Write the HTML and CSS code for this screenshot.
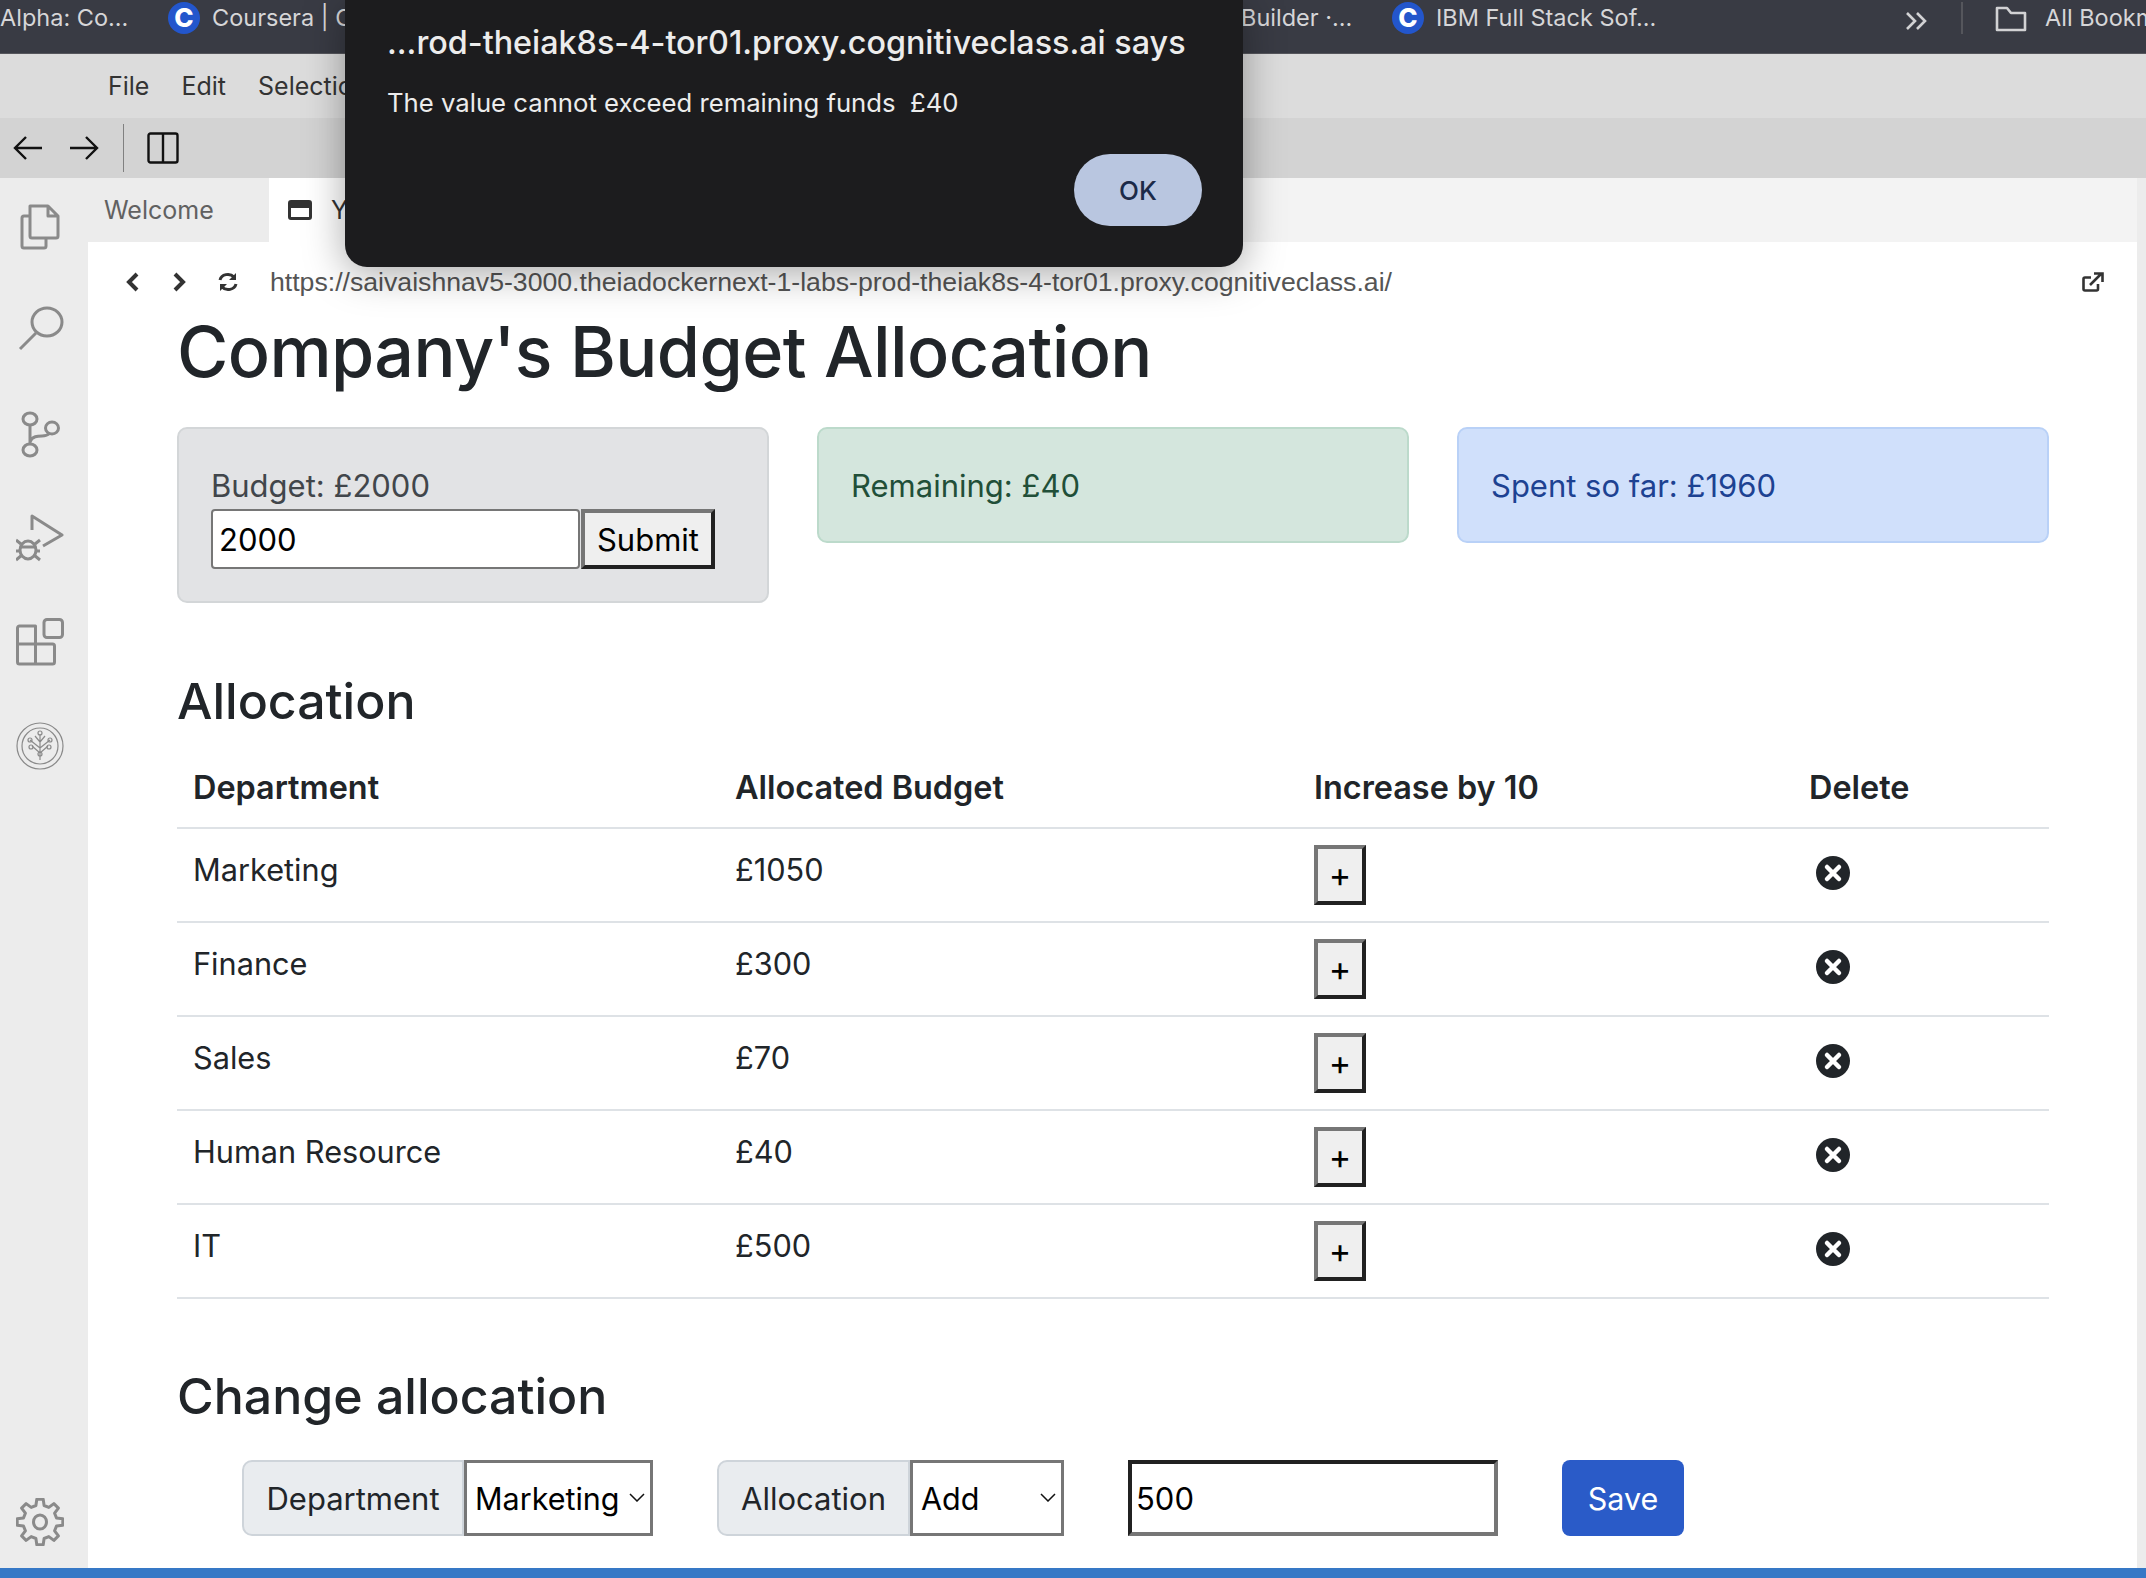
FILE: index.html
```html
<!DOCTYPE html>
<html>
    <head>
        <title>Company's Budget Allocation</title>
        <link rel="stylesheet" href="styles.css">
    </head>
    <body>
        <div class="bookmarks">
            <span class="mark first">Alpha: Co...</span>
            <span class="chip">C</span>
            <span class="mark coursera">Coursera | Coursera</span>
            <span class="mark builder">Builder ·...</span>
            <span class="chip">C</span>
            <span class="mark ibm">IBM Full Stack Sof...</span>
            <span class="more">
                <svg width="22" height="20" viewBox="0 0 22 20"><path d="M2 2l8 8-8 8M12 2l8 8-8 8" fill="none" stroke="#d2d2d4" stroke-width="2.6"/></svg>
            </span>
            <span class="sep"></span>
            <svg class="folder" width="32" height="26" viewBox="0 0 32 26"><path d="M2 24V2h10l4 5h14v17z" fill="none" stroke="#d2d2d4" stroke-width="2.6" stroke-linejoin="round"/></svg>
            <span class="mark all">All Bookmarks</span>
        </div>

        <div class="menubar">
            <span>File</span>
            <span>Edit</span>
            <span>Selection</span>
        </div>

        <div class="toolbar">
            <svg width="30" height="26" viewBox="0 0 30 26"><path d="M29 13H2M13 2L2 13l11 11" fill="none" stroke="#111" stroke-width="2.4"/></svg>
            <svg class="fwd" width="30" height="26" viewBox="0 0 30 26"><path d="M1 13h27M17 2l11 11-11 11" fill="none" stroke="#111" stroke-width="2.4"/></svg>
            <span class="toolsep"></span>
            <svg width="32" height="32" viewBox="0 0 32 32"><rect x="1.5" y="1.5" width="29" height="29" rx="2" fill="none" stroke="#111" stroke-width="2.4"/><path d="M16 2v28" stroke="#111" stroke-width="2.4"/></svg>
        </div>

        <div class="workbench">
            <div class="rail">
                <svg class="railicon" viewBox="0 0 48 48"><path d="M14 4h18l10 10v20a2 2 0 0 1-2 2H16a2 2 0 0 1-2-2zM32 4v10h10M14 14H8a2 2 0 0 0-2 2v28a2 2 0 0 0 2 2h20a2 2 0 0 0 2-2v-8"/></svg>
                <svg class="railicon" viewBox="0 0 48 48"><ellipse cx="31" cy="16" rx="15" ry="14"/><path d="M20 27L4 43"/></svg>
                <svg class="railicon" viewBox="0 0 48 48"><ellipse cx="14" cy="9" rx="7" ry="6"/><ellipse cx="14" cy="40" rx="7" ry="6"/><ellipse cx="36" cy="18" rx="6.5" ry="6"/><path d="M14 15v19M14 32c2-6 8-6 12-6 4 0 6-1 8-3"/></svg>
                <svg class="railicon" viewBox="0 0 48 48"><path d="M16 16V2l30 19-19 11"/><ellipse cx="12" cy="36" rx="8" ry="9"/><path d="M4 33h16M0 26l5 4M24 26l-5 4M0 37h4M20 37h4M0 46l6-5M24 46l-6-5"/></svg>
                <svg class="railicon" viewBox="0 0 48 48"><path d="M1.500 10a2 2 0 0 1 2-2h16v38h-16a2 2 0 0 1-2-2zM19.500 46V26h17a2 2 0 0 1 2 2v16a2 2 0 0 1-2 2zM1.500 26h18"/><rect x="28" y="1.500" width="18.500" height="18" rx="3"/></svg>
                <svg class="railicon thin" viewBox="0 0 48 48"><ellipse cx="24" cy="24" rx="23" ry="23"/><ellipse cx="24" cy="24" rx="18" ry="18"/><path d="M24 38V12M16 24l8 7 8-7M14 18l10 8 10-8M19 14l5 6 5-6"/><circle cx="24" cy="11" r="2"/><circle cx="14" cy="18" r="2"/><circle cx="34" cy="18" r="2"/><circle cx="15" cy="25" r="2"/><circle cx="33" cy="25" r="2"/><circle cx="24" cy="32" r="2"/></svg>
                <svg class="railicon gear" viewBox="0 0 48 48"><polygon transform="translate(24 24)" points="16.5,-4.1 22.8,-3.2 22.8,3.2 16.5,4.1 14.6,8.8 18.4,13.9 13.9,18.4 8.8,14.6 4.1,16.5 3.2,22.8 -3.2,22.8 -4.1,16.5 -8.8,14.6 -13.9,18.4 -18.4,13.9 -14.6,8.8 -16.5,4.1 -22.8,3.2 -22.8,-3.2 -16.5,-4.1 -14.6,-8.8 -18.4,-13.9 -13.9,-18.4 -8.8,-14.6 -4.1,-16.5 -3.2,-22.8 3.2,-22.8 4.1,-16.5 8.8,-14.6 13.9,-18.4 18.4,-13.9 14.6,-8.8"/><ellipse cx="24" cy="24" rx="6.500" ry="7"/></svg>
            </div>

            <div class="main">
                <div class="tabs">
                    <span class="tab">Welcome</span>
                    <span class="tab active">
                        <svg width="24" height="20" viewBox="0 0 24 20"><rect x="1.5" y="1.5" width="21" height="17" rx="1.5" fill="none" stroke="#333" stroke-width="3"/><path d="M2 5h20" stroke="#333" stroke-width="6"/></svg>
                        You
                    </span>
                </div>

                <div class="urlbar">
                    <svg class="navicon" width="14" height="20" viewBox="0 0 14 20"><path d="M11 2L3 10l8 8" fill="none" stroke="#333" stroke-width="4"/></svg>
                    <svg class="navicon" width="14" height="20" viewBox="0 0 14 20"><path d="M3 2l8 8-8 8" fill="none" stroke="#333" stroke-width="4"/></svg>
                    <svg class="navicon" width="20" height="20" viewBox="0 0 20 20"><path d="M2 8a8 7 0 0 1 14-3M18 12a8 7 0 0 1-14 3" fill="none" stroke="#333" stroke-width="3"/><path d="M18 1v7h-7zM2 19v-7h7z" fill="#333"/></svg>
                    <span class="url">https://saivaishnav5-3000.theiadockernext-1-labs-prod-theiak8s-4-tor01.proxy.cognitiveclass.ai/</span>
                    <svg class="popout" width="22" height="20" viewBox="0 0 22 20"><path d="M16 12v5a1.500 1.500 0 0 1-1.500 1.500H3A1.500 1.500 0 0 1 1.500 17V7A1.500 1.500 0 0 1 3 5.500h6" fill="none" stroke="#333" stroke-width="2.600"/><path d="M8 13L19 2M12 1.500h8.500V10" fill="none" stroke="#333" stroke-width="2.600"/></svg>
                </div>

                <div class="page">
                    <h1>Company's Budget Allocation</h1>

                    <div class="cards">
                        <div class="card grey">
                            <div>Budget: £2000</div>
                            <div class="budgetform">
                                <input class="budgetinput" type="text" value="2000">
                                <button class="bevel submit">Submit</button>
                            </div>
                        </div>
                        <div class="card green">Remaining: £40</div>
                        <div class="card blue">Spent so far: £1960</div>
                    </div>

                    <h3 class="alloc">Allocation</h3>

                    <table>
                        <thead>
                            <tr>
                                <th class="col1">Department</th>
                                <th class="col2">Allocated Budget</th>
                                <th class="col3">Increase by 10</th>
                                <th class="col4">Delete</th>
                            </tr>
                        </thead>
                        <tbody>
                            <tr>
                                <td>Marketing</td>
                                <td>£1050</td>
                                <td><button class="bevel plus">+</button></td>
                                <td><svg class="del" viewBox="0 0 34 34"><circle cx="17" cy="17" r="17" fill="#212529"/><path d="M11 11l12 12M23 11L11 23" stroke="#fff" stroke-width="4.500" stroke-linecap="round"/></svg></td>
                            </tr>
                            <tr>
                                <td>Finance</td>
                                <td>£300</td>
                                <td><button class="bevel plus">+</button></td>
                                <td><svg class="del" viewBox="0 0 34 34"><circle cx="17" cy="17" r="17" fill="#212529"/><path d="M11 11l12 12M23 11L11 23" stroke="#fff" stroke-width="4.500" stroke-linecap="round"/></svg></td>
                            </tr>
                            <tr>
                                <td>Sales</td>
                                <td>£70</td>
                                <td><button class="bevel plus">+</button></td>
                                <td><svg class="del" viewBox="0 0 34 34"><circle cx="17" cy="17" r="17" fill="#212529"/><path d="M11 11l12 12M23 11L11 23" stroke="#fff" stroke-width="4.500" stroke-linecap="round"/></svg></td>
                            </tr>
                            <tr>
                                <td>Human Resource</td>
                                <td>£40</td>
                                <td><button class="bevel plus">+</button></td>
                                <td><svg class="del" viewBox="0 0 34 34"><circle cx="17" cy="17" r="17" fill="#212529"/><path d="M11 11l12 12M23 11L11 23" stroke="#fff" stroke-width="4.500" stroke-linecap="round"/></svg></td>
                            </tr>
                            <tr>
                                <td>IT</td>
                                <td>£500</td>
                                <td><button class="bevel plus">+</button></td>
                                <td><svg class="del" viewBox="0 0 34 34"><circle cx="17" cy="17" r="17" fill="#212529"/><path d="M11 11l12 12M23 11L11 23" stroke="#fff" stroke-width="4.500" stroke-linecap="round"/></svg></td>
                            </tr>
                        </tbody>
                    </table>

                    <h3 class="change">Change allocation</h3>

                    <div class="changeform">
                        <label class="addon dept">Department</label>
                        <span class="pickwrap">
                            <select class="pick deptpick"><option>Marketing</option></select>
                            <svg class="caret" width="16" height="9" viewBox="0 0 16 9"><path d="M1 1l7 7 7-7" fill="none" stroke="#111" stroke-width="1.500"/></svg>
                        </span>
                        <label class="addon allocation">Allocation</label>
                        <span class="pickwrap">
                            <select class="pick addpick"><option>Add</option></select>
                            <svg class="caret" width="16" height="9" viewBox="0 0 16 9"><path d="M1 1l7 7 7-7" fill="none" stroke="#111" stroke-width="1.500"/></svg>
                        </span>
                        <input class="amount" type="text" value="500">
                        <button class="save">Save</button>
                    </div>
                </div>
            </div>

            <div class="strip"></div>
        </div>

        <div class="statusbar"></div>

        <div class="dialog">
            <div class="dialogtitle">...rod-theiak8s-4-tor01.proxy.cognitiveclass.ai says</div>
            <div class="dialogmsg">The value cannot exceed remaining funds&nbsp; £40</div>
            <button class="ok">OK</button>
        </div>
    </body>
</html>
```

FILE: styles.css
```css
html, body {
    margin: 0;
    height: 1578px;
    overflow: hidden;
}

body {
    display: flex;
    flex-direction: column;
    font-family: Inter, "Liberation Sans", sans-serif;
    color: #212529;
    background: white;
}

/* browser bookmarks */
.bookmarks {
    height: 54px;
    flex: none;
    display: flex;
    align-items: flex-start;
    background: #393b44;
    border-bottom: 1px solid #55565c;
    box-sizing: border-box;
    overflow: hidden;
    color: #d6d6d8;
    font-size: 23.5px;
    line-height: 36px;
    white-space: nowrap;
}

.mark {
    flex: none;
}

.mark.first {
    width: 168px;
}

.chip {
    width: 32px;
    height: 32px;
    margin-top: 2px;
    border-radius: 50%;
    background: #2356cc;
    color: white;
    font-weight: 800;
    font-size: 26px;
    line-height: 32px;
    text-align: center;
    flex: none;
}

.mark.coursera {
    margin-left: 12px;
    width: 1029px;
}

.mark.builder {
    width: 151px;
}

.mark.ibm {
    margin-left: 12px;
    width: 469px;
}

.more {
    margin-top: 5px;
    width: 56px;
    flex: none;
}

.sep {
    width: 2px;
    height: 32px;
    margin-top: 2px;
    background: #55565c;
    flex: none;
}

.folder {
    margin: 6px 0 0 32px;
    flex: none;
}

.mark.all {
    margin-left: 18px;
}

/* theia menus */
.menubar {
    height: 64px;
    flex: none;
    box-sizing: border-box;
    display: flex;
    gap: 32px;
    padding-left: 108px;
    background: #dcdcdc;
    font-size: 25px;
    line-height: 64px;
    color: #333;
}

.toolbar {
    height: 60px;
    flex: none;
    display: flex;
    align-items: center;
    padding-left: 13px;
    background: #d3d3d3;
}

.fwd {
    margin-left: 26px;
}

.toolsep {
    width: 1px;
    height: 48px;
    margin: 0 23px 0 24px;
    background: #808080;
}

.workbench {
    flex: 1;
    display: flex;
    min-height: 0;
}

.rail {
    width: 88px;
    flex: none;
    display: flex;
    flex-direction: column;
    align-items: flex-start;
    gap: 56px;
    padding: 24px 0 0 16px;
    box-sizing: border-box;
    background: #ececec;
}

.railicon {
    width: 48px;
    height: 48px;
    fill: none;
    stroke: #8a8a8a;
    stroke-width: 3;
    stroke-linejoin: round;
}

.railicon.thin {
    stroke-width: 1.2;
}

.railicon.gear {
    margin-top: auto;
    margin-bottom: 22px;
}

.main {
    flex: 1;
    min-width: 0;
}

.strip {
    width: 9px;
    flex: none;
    background: #ececec;
}

.tabs {
    height: 64px;
    display: flex;
    background: #f3f3f3;
    font-size: 25px;
    line-height: 64px;
    color: #616161;
}

.tab {
    box-sizing: border-box;
    width: 181px;
    padding-left: 16px;
    background: #ececec;
}

.tab.active {
    display: flex;
    align-items: center;
    gap: 19px;
    width: 500px;
    padding-left: 19px;
    background: white;
    color: #333;
}

.urlbar {
    height: 64px;
    display: flex;
    align-items: center;
    padding: 8px 0 0 38px;
    font-family: "Liberation Sans", sans-serif;
    font-size: 26.65px;
    color: #555;
}

.navicon {
    margin-right: 32px;
}

.navicon:nth-child(3) {
    margin-right: 32px;
}

.url {
    flex: 1;
    white-space: nowrap;
}

.popout {
    margin-right: 33px;
}

/* the app in the preview */
.page {
    padding: 0 88px 0 89px;
}

h1 {
    margin: 0;
    font-size: 70px;
    font-weight: 500;
    line-height: 76px;
    letter-spacing: -0.6px;
}

.cards {
    display: grid;
    grid-template-columns: repeat(3, 592px);
    gap: 48px;
    align-items: start;
    margin-top: 37px;
    font-size: 31px;
    line-height: 46px;
}

.card {
    box-sizing: border-box;
    padding: 34px 32px 32px;
    border: 2px solid;
    border-radius: 10px;
}

.card.grey {
    background: #e2e3e5;
    border-color: #d3d6d8;
    color: #41464b;
}

.card.green {
    background: #d4e6dd;
    border-color: #bcdacb;
    color: #214f38;
}

.card.blue {
    background: #d0e0fb;
    border-color: #b9d1f7;
    color: #1d4292;
}

.budgetform {
    display: flex;
    gap: 1px;
    height: 60px;
}

.budgetinput {
    width: 369px;
    box-sizing: border-box;
    padding: 0 6px;
    border: 2px solid #767676;
    border-radius: 4px;
    font: 31px Inter, sans-serif;
    color: black;
}

.bevel {
    box-sizing: border-box;
    border: 4px solid;
    border-color: #767676 #212121 #212121 #767676;
    background: #efefef;
    color: black;
    font-family: Inter, sans-serif;
    padding: 0;
}

.submit {
    width: 134px;
    font-size: 31px;
}

h3 {
    margin: 0;
    font-size: 50px;
    font-weight: 500;
    line-height: 62px;
}

h3.alloc {
    margin-top: 67px;
}

table {
    width: 1872px;
    border-collapse: collapse;
    margin-top: 17px;
    font-size: 30.7px;
    line-height: 46px;
}

th {
    text-align: left;
    font-size: 32.4px;
    font-weight: 600;
    padding: 16px;
    border-bottom: 2px solid #dee2e6;
}

td {
    padding: 0 16px;
    height: 92px;
    vertical-align: top;
    border-bottom: 2px solid #dee2e6;
}

td:nth-child(1), td:nth-child(2) {
    padding-top: 18px;
    height: 74px;
}

.col1 { width: 510px; }
.col2 { width: 547px; }
.col3 { width: 463px; }

.plus {
    display: block;
    width: 52px;
    height: 60px;
    margin-top: 16px;
    font-size: 34px;
    line-height: 1;
}

.del {
    display: block;
    width: 34px;
    height: 34px;
    margin: 27px 0 0 7px;
}

h3.change {
    margin-top: 66px;
}

.changeform {
    display: flex;
    height: 76px;
    margin: 33px 0 0 65px;
    font-size: 31px;
}

.addon {
    box-sizing: border-box;
    border: 2px solid #ced4da;
    border-radius: 10px 0 0 10px;
    background: #e9ecef;
    line-height: 73px;
    text-align: center;
}

.addon.dept {
    width: 222px;
}

.addon.allocation {
    width: 193px;
    margin-left: 64px;
}

.pickwrap {
    position: relative;
    display: flex;
}

.pick {
    box-sizing: border-box;
    appearance: none;
    padding: 0 0 0 8px;
    border: 3px solid #767676;
    border-radius: 0;
    background: white;
    color: black;
    font: 30.5px Inter, sans-serif;
}

.caret {
    position: absolute;
    right: 8px;
    top: 33px;
}

.deptpick {
    width: 189px;
}

.addpick {
    width: 154px;
}

.amount {
    box-sizing: border-box;
    width: 370px;
    margin-left: 64px;
    padding: 0 4px;
    border: 4px solid;
    border-color: #212121 #767676 #767676 #212121;
    font: 31px Inter, sans-serif;
    color: black;
}

.save {
    width: 122px;
    margin-left: 64px;
    border: none;
    border-radius: 8px;
    background: #2a5bc8;
    color: white;
    font: 30.5px Inter, sans-serif;
}

.statusbar {
    height: 10px;
    flex: none;
    background: #3678c6;
}

/* browser alert over everything */
.dialog {
    position: absolute;
    left: 345px;
    top: 0;
    width: 898px;
    height: 267px;
    box-sizing: border-box;
    padding: 22px 42px 0;
    background: #1c1c1e;
    border-radius: 0 0 22px 22px;
    box-shadow: 0 6px 40px rgba(0, 0, 0, 0.35);
    color: #ececec;
}

.dialogtitle {
    font-size: 32.3px;
    font-weight: 500;
    line-height: 42px;
    white-space: nowrap;
}

.dialogmsg {
    margin-top: 18px;
    font-size: 25.7px;
    line-height: 42px;
}

.ok {
    position: absolute;
    right: 41px;
    top: 154px;
    width: 128px;
    height: 72px;
    border: none;
    border-radius: 36px;
    background: #b9c6e0;
    color: #1c2a48;
    font: 500 26px Inter, sans-serif;
}
```
